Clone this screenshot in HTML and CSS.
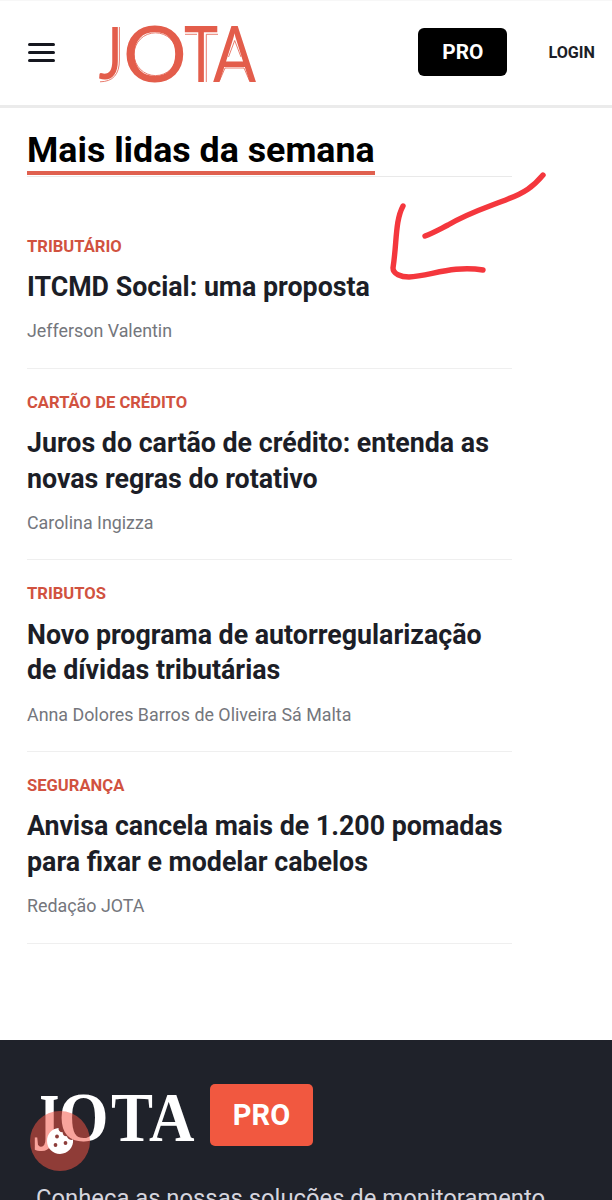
FILE: index.html
```html
<!DOCTYPE html>
<html lang="pt-BR">
<head>
    <meta charset="UTF-8">
    <meta name="viewport" content="width=device-width, initial-scale=1.0">
    <title>JOTA</title>
    <link rel="stylesheet" href="styles.css">
</head>
<body>
    <header class="header">
        <button class="menu-btn" aria-label="Menu">
            <span></span>
            <span></span>
            <span></span>
        </button>
        <svg class="logo" width="160" height="64" viewBox="98 22 160 64" role="img" aria-label="JOTA">
            <g class="logo-main">
                <text transform="translate(98.5 78.5) scale(0.76 0.96)" font-size="75">J</text>
                <text transform="translate(122.8 82.2) scale(1.07 1.045)" font-size="75">O</text>
                <text transform="translate(184 82) scale(0.77 1.03)" font-size="75">T</text>
                <text transform="translate(213 82) scale(0.85 1.04)" font-size="75">A</text>
            </g>
            <!-- hairlines beside the strokes -->
            <g class="logo-line">
                <path d="M119.4 27 V60 Q119.4 81.6 100 81.8"/>
                <circle cx="155.5" cy="54.2" r="21.4"/>
                <path d="M185 34.3 H197 M206.3 82 V34.3 H218"/>
                <path d="M228.5 57 L234.7 40.5 L241 57 M219 82 L225 68 H244 L250 82"/>
            </g>
        </svg>
        <a class="btn-pro" href="#">PRO</a>
        <a class="login" href="#">LOGIN</a>
    </header>

    <main class="container">
        <div class="section-title">
            <h1>Mais lidas da semana</h1>
        </div>
        <ul class="news-list">
            <li>
                <a class="category" href="#">TRIBUTÁRIO</a>
                <h2>ITCMD Social: uma proposta</h2>
                <p class="author">Jefferson Valentin</p>
            </li>
            <li>
                <a class="category" href="#">CARTÃO DE CRÉDITO</a>
                <h2>Juros do cartão de crédito: entenda as<br>novas regras do rotativo</h2>
                <p class="author">Carolina Ingizza</p>
            </li>
            <li>
                <a class="category" href="#">TRIBUTOS</a>
                <h2>Novo programa de autorregularização<br>de dívidas tributárias</h2>
                <p class="author">Anna Dolores Barros de Oliveira Sá Malta</p>
            </li>
            <li>
                <a class="category" href="#">SEGURANÇA</a>
                <h2>Anvisa cancela mais de 1.200 pomadas<br>para fixar e modelar cabelos</h2>
                <p class="author">Redação JOTA</p>
            </li>
        </ul>
    </main>

    <footer class="footer">
        <div class="footer-brand">
            <svg class="footer-logo" width="164" height="64" viewBox="32 1090 164 64" role="img" aria-label="JOTA">
                <text transform="translate(32.5 1150) scale(0.76 1.17)" font-size="70">J</text>
                <text transform="translate(58.5 1141) scale(0.92 1)" font-size="70">O</text>
                <text transform="translate(111 1141) scale(0.9 1)" font-size="70">T</text>
                <text transform="translate(149 1141) scale(0.9 1)" font-size="70">A</text>
            </svg>
            <span class="footer-pro">PRO</span>
        </div>
        <p class="footer-text">Conheça as nossas soluções de monitoramento</p>
    </footer>

    <button class="cookie-btn" aria-label="Cookies">
        <svg width="28" height="28" viewBox="0 0 28 28">
            <path class="cookie" d="M12.5 1 C12.3 3.5 14 5.4 16.7 5.2 C16.6 8 18.5 9.7 21 9.3 C21.6 12 24 13.6 27 12.6 C28 20 22 27 14 27 C7 27 1 21.5 1 14 C1 7 6 1.5 12.5 1 Z"/>
            <circle cx="11" cy="9.5" r="1.9"/>
            <circle cx="9.5" cy="18" r="1.9"/>
            <circle cx="19.5" cy="16" r="1.9"/>
        </svg>
    </button>

    <svg class="arrow" width="170" height="120" viewBox="382 166 170 120">
        <path d="M543 175 C533 187 524 193 508 199 C485 208 468 213 448 225 C440 229 433 233 425 236"/>
        <path d="M403 206 C395 221 397 242 393 268 C393 274 401 277 409 277 C430 276 453 265 483 270"/>
    </svg>
</body>
</html>
```

FILE: styles.css
```css
* {
    box-sizing: border-box;
    margin: 0;
    padding: 0;
}

body {
    position: relative;
    height: 1200px;
    overflow: hidden;
    font-family: Roboto, "Liberation Sans", sans-serif;
    color: #1c1e27;
    background-color: #fff;
}

a {
    color: inherit;
    text-decoration: none;
}

button {
    border: none;
    background: none;
    cursor: pointer;
}

.header {
    display: flex;
    align-items: center;
    height: 108px;
    padding: 0 17px 2px 28px;
    border-top: 1px solid #f7f7f7;
    border-bottom: 3px solid #ebebeb;
}

.menu-btn {
    display: flex;
    flex-direction: column;
    gap: 4.6px;
    width: 27px;
    margin-top: 1px;
    margin-right: 43px;
}

.menu-btn span {
    height: 3px;
    border-radius: 2px;
    background-color: #15171f;
}

.logo {
    margin-top: 3px;
    overflow: visible;
}

.logo-main {
    fill: #e35d4b;
    font-family: Lato, sans-serif;
}

.logo-line {
    fill: none;
    stroke: #e35d4b;
    stroke-width: 0.8;
}

.btn-pro {
    display: flex;
    align-items: center;
    justify-content: center;
    width: 89px;
    height: 48px;
    margin-left: auto;
    margin-right: 41px;
    border-radius: 6px;
    background-color: #000;
    color: #fff;
    font-size: 20.8px;
    font-weight: 700;
}

.login {
    font-size: 16.2px;
    font-weight: 700;
}

.container {
    width: 512px;
    padding-left: 27px;
}

.section-title {
    display: flex;
    height: 69px;
    padding-top: 20px;
    border-bottom: 1px solid #e9e9e9;
}

.section-title h1 {
    height: 47px;
    border-bottom: 4px solid #e0604f;
    color: #000;
    font-size: 35.75px;
    font-weight: 700;
    line-height: 45px;
    white-space: nowrap;
}

.news-list {
    padding-top: 35.7px;
    list-style: none;
}

.news-list li {
    padding: 24.1px 0 25.3px;
    border-bottom: 1px solid #efefef;
}

.category {
    display: block;
    color: #d1523f;
    font-size: 16.6px;
    font-weight: 700;
    line-height: 20px;
}

.news-list h2 {
    margin-top: 13.2px;
    font-size: 26.77px;
    font-weight: 700;
    line-height: 35.7px;
    white-space: nowrap;
}

.author {
    margin-top: 14.7px;
    color: #74767c;
    font-size: 17.85px;
    line-height: 22px;
}

.footer {
    height: 170px;
    margin-top: 96px;
    padding: 44px 0 0 32px;
    background-color: #1f222a;
}

.footer-brand {
    display: flex;
    gap: 14px;
}

.footer-logo {
    margin-top: 6px;
    overflow: visible;
}

.footer-logo text {
    fill: #fff;
    font-family: "Liberation Serif", serif;
    font-weight: 700;
}

.footer-pro {
    width: 103px;
    height: 62px;
    border-radius: 5px;
    background-color: #f15840;
    color: #fff;
    font-size: 29px;
    font-weight: 700;
    line-height: 62px;
    text-align: center;
}

.footer-text {
    margin-top: 29px;
    padding-left: 4px;
    color: #d5d5de;
    font-size: 23.8px;
    line-height: 30px;
    white-space: nowrap;
}

.cookie-btn {
    position: absolute;
    top: 1111px;
    left: 30px;
    display: flex;
    align-items: center;
    justify-content: center;
    width: 60px;
    height: 60px;
    border-radius: 50%;
    background-color: rgba(243, 84, 68, 0.53);
}

.cookie-btn circle {
    fill: #8d3d3a;
}

.cookie {
    fill: #fff;
}

.arrow {
    position: absolute;
    top: 166px;
    left: 382px;
    fill: none;
    stroke: #f4373d;
    stroke-width: 5.4;
    stroke-linecap: round;
    stroke-linejoin: round;
}
```
